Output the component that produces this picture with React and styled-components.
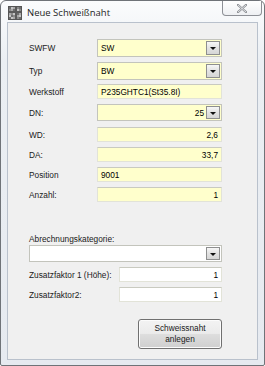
import React from "react";
import styled, { createGlobalStyle } from "styled-components";

const GlobalStyle = createGlobalStyle`
  html, body {
    margin: 0;
    padding: 0;
    background: #ffffff;
  }
  * {
    box-sizing: border-box;
  }
`;

const Window = styled.div`
  width: 265px;
  height: 366px;
  display: flex;
  flex-direction: column;
  border: 1px solid #6f7378;
  border-radius: 6px 6px 2px 2px;
  background: linear-gradient(#fbfcfd, #ebeff3 60px, #e6eaf0);
  font-family: "Liberation Sans", Arial, sans-serif;
  font-size: 8.3px;
  color: #000;
`;

const TitleBar = styled.div`
  height: 21px;
  display: flex;
  align-items: center;
  padding-left: 7px;
  gap: 5px;
`;

const Title = styled.span`
  font-family: "Open Sans", "Noto Sans", sans-serif;
  font-size: 9.5px;
  color: #1e1e1e;
  margin-top: 2px;
`;

const CloseButton = styled.div`
  margin-left: auto;
  margin-right: 2px;
  align-self: flex-start;
  width: 40px;
  height: 15px;
  border: 1px solid #8d9096;
  border-top: none;
  border-radius: 0 0 4px 4px;
  background: linear-gradient(#ffffff, #eef0f3);
  display: flex;
  align-items: center;
  justify-content: center;
`;

const Client = styled.div`
  flex: 1;
  margin: 0 6px 5px 6px;
  border: 1px solid #b9c1cc;
  background: #f0f0f0;
  display: flex;
  flex-direction: column;
  padding: 0 35px 0 21px;
`;

const Row = styled.div`
  display: flex;
  align-items: center;
  height: ${(p) => p.h}px;
  margin-top: ${(p) => p.mt}px;
`;

const Label = styled.div`
  width: ${(p) => p.w || 68}px;
  flex-shrink: 0;
  color: #1a1a1a;
  white-space: nowrap;
`;

const TextBox = styled.div`
  flex: 1;
  height: 100%;
  display: flex;
  align-items: center;
  justify-content: ${(p) => (p.right ? "flex-end" : "flex-start")};
  padding: 0 3px 0 3px;
  background: ${(p) => p.bg};
  border: 1px solid #e2e3d8;
  border-top-color: #c9cac0;
  white-space: nowrap;
`;

const ComboBox = styled.div`
  flex: 1;
  height: 100%;
  display: flex;
  align-items: center;
  background: ${(p) => p.bg};
  border: 1px solid #c3c4bc;
  padding: 1px;
`;

const ComboText = styled.div`
  flex: 1;
  padding: 0 2px;
  text-align: ${(p) => (p.right ? "right" : "left")};
  white-space: nowrap;
`;

const DropButton = styled.div`
  width: 14px;
  height: 100%;
  border: 1px solid #8e8f8f;
  background: linear-gradient(#f7f7f7, #e2e2e2 50%, #d6d6d6);
  display: flex;
  align-items: center;
  justify-content: center;
  &::after {
    content: "";
    border-left: 3px solid transparent;
    border-right: 3px solid transparent;
    border-top: 3px solid #111;
    margin-top: 1px;
  }
`;

const SectionLabel = styled.div`
  margin-top: 32px;
  height: 10px;
  line-height: 10px;
  color: #1a1a1a;
`;

const Button = styled.div`
  align-self: flex-end;
  margin-top: 17px;
  width: 84px;
  height: 30px;
  border: 1px solid #707070;
  border-radius: 3px;
  background: linear-gradient(#f3f3f3 0%, #ebebeb 48%, #dddddd 52%, #cfcfcf 100%);
  box-shadow: inset 0 0 0 1px #fcfcfc;
  display: flex;
  align-items: center;
  justify-content: center;
  text-align: center;
  line-height: 11px;
  color: #1a1a1a;
`;

function AppIcon() {
  const cells = [];
  const shades = ["#6e6e6e", "#a8a8a8", "#8a8a8a", "#c4c4c4", "#5a5a5a"];
  for (let y = 0; y < 6; y++) {
    for (let x = 0; x < 6; x++) {
      cells.push(
        <rect
          key={`${x}-${y}`}
          x={1 + x * 2}
          y={1 + y * 2}
          width="2"
          height="2"
          fill={shades[(x * 3 + y * 2 + x * y) % shades.length]}
        />
      );
    }
  }
  return (
    <svg width="14" height="14" viewBox="0 0 14 14" style={{ marginTop: 2 }}>
      <rect x="0.5" y="0.5" width="13" height="13" fill="#9a9a9a" stroke="#555" />
      {cells}
    </svg>
  );
}

function CloseIcon() {
  return (
    <svg width="10" height="9" viewBox="0 0 10 9">
      <path
        d="M1 1 L9 8 M9 1 L1 8"
        stroke="#8a8d92"
        strokeWidth="2.2"
        strokeLinecap="square"
      />
      <path d="M1 1 L9 8 M9 1 L1 8" stroke="#f4f5f7" strokeWidth="0.8" />
    </svg>
  );
}

const YELLOW = "#ffffcc";

export default function App() {
  return (
    <>
      <GlobalStyle />
      <Window>
        <TitleBar>
          <AppIcon />
          <Title>Neue Schweißnaht</Title>
          <CloseButton>
            <CloseIcon />
          </CloseButton>
        </TitleBar>
        <Client>
          <Row h={18} mt={16}>
            <Label>SWFW</Label>
            <ComboBox bg={YELLOW}>
              <ComboText>SW</ComboText>
              <DropButton />
            </ComboBox>
          </Row>
          <Row h={18} mt={5}>
            <Label>Typ</Label>
            <ComboBox bg={YELLOW}>
              <ComboText>BW</ComboText>
              <DropButton />
            </ComboBox>
          </Row>
          <Row h={15} mt={4}>
            <Label>Werkstoff</Label>
            <TextBox bg={YELLOW}>P235GHTC1(St35.8I)</TextBox>
          </Row>
          <Row h={17} mt={5}>
            <Label>DN:</Label>
            <ComboBox bg={YELLOW}>
              <ComboText right>25</ComboText>
              <DropButton />
            </ComboBox>
          </Row>
          <Row h={15} mt={6}>
            <Label>WD:</Label>
            <TextBox bg={YELLOW} right>
              2,6
            </TextBox>
          </Row>
          <Row h={15} mt={5}>
            <Label>DA:</Label>
            <TextBox bg={YELLOW} right>
              33,7
            </TextBox>
          </Row>
          <Row h={15} mt={5}>
            <Label>Position</Label>
            <TextBox bg={YELLOW}>9001</TextBox>
          </Row>
          <Row h={15} mt={5}>
            <Label>Anzahl:</Label>
            <TextBox bg={YELLOW} right>
              1
            </TextBox>
          </Row>

          <SectionLabel>Abrechnungskategorie:</SectionLabel>
          <Row h={17} mt={1}>
            <ComboBox bg="#ffffff">
              <ComboText />
              <DropButton />
            </ComboBox>
          </Row>
          <Row h={15} mt={5}>
            <Label w={90}>Zusatzfaktor 1 (Höhe):</Label>
            <TextBox bg="#ffffff" right>
              1
            </TextBox>
          </Row>
          <Row h={15} mt={5}>
            <Label w={90}>Zusatzfaktor2:</Label>
            <TextBox bg="#ffffff" right>
              1
            </TextBox>
          </Row>
          <Button>
            Schweissnaht
            <br />
            anlegen
          </Button>
        </Client>
      </Window>
    </>
  );
}
